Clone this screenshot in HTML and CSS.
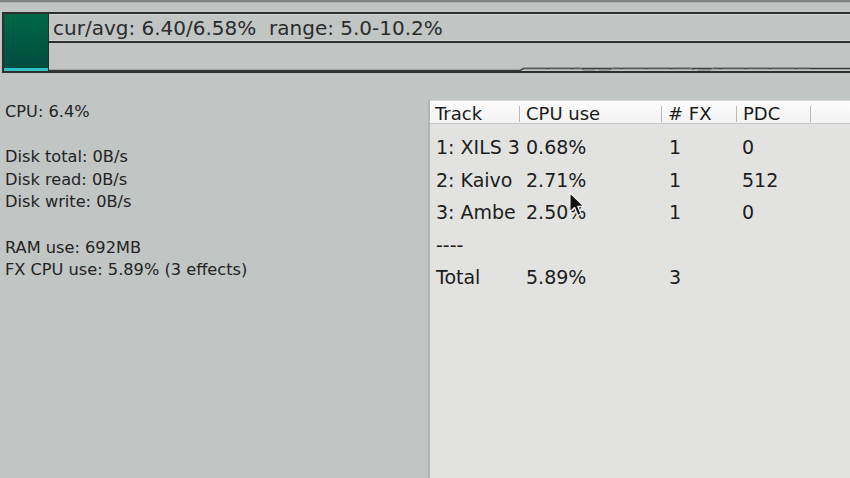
FILE: index.html
```html
<!DOCTYPE html>
<html>
<head>
<meta charset="utf-8">
<link rel="stylesheet" href="styles.css">
</head>
<body>
<div class="topline"></div>
<div class="meter">
  <div class="meter-fill"></div>
  <div class="meter-body">
    <div class="meter-text">cur/avg: 6.40/6.58%  range: 5.0-10.2%</div>
    <div class="meter-graph">
      <svg class="graph" viewBox="0 0 800 29" preserveAspectRatio="none">
        <polyline points="0,27.5 470,27.5 474,25.5 800,25.5" fill="none" stroke="#3a3c3c" stroke-width="1.4"/>
        <polyline points="474,25 530,25 534,27 560,27 564,25 640,25 644,27 660,27 664,25 760,25" fill="none" stroke="#7a7d7d" stroke-width="1" stroke-dasharray="22 3"/>
      </svg>
    </div>
  </div>
</div>
<div class="main">
  <div class="stats">
    <div class="line">CPU: 6.4%</div>
    <div class="line">&nbsp;</div>
    <div class="line">Disk total: 0B/s</div>
    <div class="line">Disk read: 0B/s</div>
    <div class="line">Disk write: 0B/s</div>
    <div class="line">&nbsp;</div>
    <div class="line">RAM use: 692MB</div>
    <div class="line">FX CPU use: 5.89% (3 effects)</div>
  </div>
  <div class="tracks">
    <div class="thead">
      <div class="th">Track</div>
      <div class="th">CPU use</div>
      <div class="th">#&nbsp;FX</div>
      <div class="th">PDC</div>
      <div class="th last"></div>
    </div>
    <div class="tbody">
      <div class="tr"><div class="td">1: XILS 3</div><div class="td">0.68%</div><div class="td">1</div><div class="td">0</div><div class="td"></div></div>
      <div class="tr"><div class="td">2: Kaivo</div><div class="td">2.71%</div><div class="td">1</div><div class="td">512</div><div class="td"></div></div>
      <div class="tr"><div class="td">3: Ambe</div><div class="td">2.50%</div><div class="td">1</div><div class="td">0</div><div class="td"></div></div>
      <div class="tr"><div class="td">----</div><div class="td"></div><div class="td"></div><div class="td"></div><div class="td"></div></div>
      <div class="tr"><div class="td">Total</div><div class="td">5.89%</div><div class="td">3</div><div class="td"></div><div class="td"></div></div>
    </div>
    <svg class="cursor" width="19" height="28" viewBox="0 0 16 24">
      <path d="M1.5 1.5 L1.5 18 L5.5 14.2 L8.3 21 L11 19.8 L8.3 13.2 L13.5 13.2 Z" fill="#111" stroke="#f2f2f2" stroke-width="1.1" stroke-linejoin="round"/>
    </svg>
  </div>
</div>
</body>
</html>
```

FILE: styles.css
```css
html, body {
  margin: 0;
  padding: 0;
}
body {
  width: 850px;
  height: 478px;
  overflow: hidden;
  background: #c1c5c4;
  font-family: "DejaVu Sans", Verdana, sans-serif;
  color: #262626;
}
.topline {
  height: 2px;
  background: #828585;
  border-bottom: 1px solid #a9adac;
}
.meter {
  margin: 9px 0 0 2px;
  height: 57px;
  display: flex;
  border-top: 2px solid #2d2f2f;
  border-bottom: 2px solid #2d2f2f;
  border-left: 2px solid #2d2f2f;
}
.meter-fill {
  width: 44px;
  background: linear-gradient(#006845, #004d40);
  border-bottom: 3px solid #2ec2c2;
  box-sizing: border-box;
}
.meter-body {
  flex: 1;
  display: flex;
  flex-direction: column;
  border-left: 1px solid #2d2f2f;
}
.meter-text {
  height: 26px;
  line-height: 26px;
  font-size: 20px;
  padding-left: 4px;
  white-space: pre;
  color: #2a2c2c;
  border-top: 1px solid #d3d6d5;
  border-bottom: 2px solid #2d2f2f;
  box-shadow: 0 -1px 0 #d3d6d5 inset;
}
.meter-graph {
  flex: 1;
  display: flex;
}
.graph {
  width: 100%;
  height: 100%;
  display: block;
}
.main {
  display: flex;
  align-items: flex-start;
}
.stats {
  width: 428px;
  padding: 28px 0 0 5px;
  box-sizing: border-box;
  font-size: 16.2px;
  line-height: 22.6px;
  color: #232323;
}
.tracks {
  position: relative;
  flex: 1;
  margin-top: 27px;
  height: 378px;
  background: #e2e3e1;
  border-left: 2px solid #b1b5b4;
}
.thead {
  display: grid;
  grid-template-columns: 90px 142px 75px 74px 1fr;
  height: 24px;
  padding: 5px 0 0;
  box-sizing: border-box;
  background: linear-gradient(#fdfdfd, #f2f2f2);
  border-top: 1px solid #d6d8d7;
  border-bottom: 1px solid #c4c5c4;
}
.th {
  height: 16px;
  line-height: 16px;
  font-size: 18px;
  padding-left: 5px;
  border-right: 1px solid #b9b9b9;
  white-space: nowrap;
  color: #1a1a1a;
}
.th:nth-child(n+2) {
  padding-left: 6px;
}
.th.last {
  border-right: none;
}
.tbody {
  padding-top: 7px;
}
.tr {
  display: grid;
  grid-template-columns: 90px 142px 75px 74px 1fr;
  height: 32.6px;
  line-height: 32.6px;
  font-size: 19px;
  color: #1c1c1c;
}
.td {
  padding-left: 6px;
  white-space: nowrap;
  overflow: hidden;
}
.td:nth-child(3) {
  padding-left: 7px;
}
.td:nth-child(4) {
  padding-left: 5px;
}
.cursor {
  position: absolute;
  left: 138px;
  top: 91px;
}
```
